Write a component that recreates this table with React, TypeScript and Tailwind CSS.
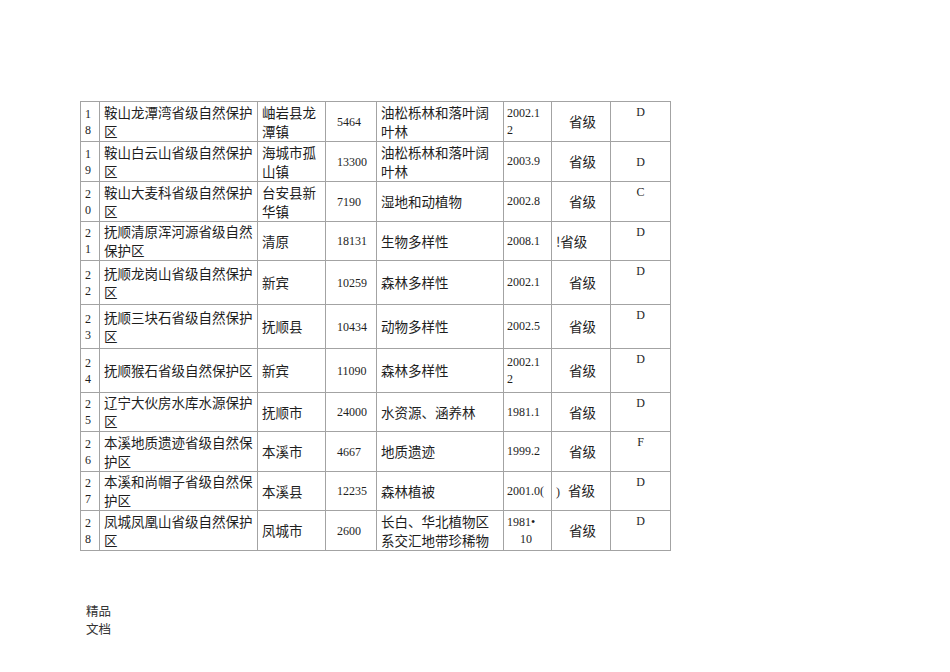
import React from "react";

type Row = {
  no: [string, string];
  name: string[];
  place: string[];
  area: string;
  kind: string[];
  date: React.ReactNode;
  level: React.ReactNode;
  grade: string;
  gradeMiddle?: boolean;
  h: number;
};

const rows: Row[] = [
  { no: ["1", "8"], name: ["鞍山龙潭湾省级自然保护", "区"], place: ["岫岩县龙", "潭镇"], area: "5464", kind: ["油松栎林和落叶阔", "叶林"], date: <>2002.1<br />2</>, level: "省级", grade: "D", h: 40 },
  { no: ["1", "9"], name: ["鞍山白云山省级自然保护", "区"], place: ["海城市孤", "山镇"], area: "13300", kind: ["油松栎林和落叶阔", "叶林"], date: "2003.9", level: "省级", grade: "D", gradeMiddle: true, h: 40 },
  { no: ["2", "0"], name: ["鞍山大麦科省级自然保护", "区"], place: ["台安县新", "华镇"], area: "7190", kind: ["湿地和动植物"], date: "2002.8", level: "省级", grade: "C", h: 40 },
  { no: ["2", "1"], name: ["抚顺清原浑河源省级自然", "保护区"], place: ["清原"], area: "18131", kind: ["生物多样性"], date: "2008.1", level: <span className="-ml-[13px]">!省级</span>, grade: "D", h: 39 },
  { no: ["2", "2"], name: ["抚顺龙岗山省级自然保护", "区"], place: ["新宾"], area: "10259", kind: ["森林多样性"], date: "2002.1", level: "省级", grade: "D", h: 44 },
  { no: ["2", "3"], name: ["抚顺三块石省级自然保护", "区"], place: ["抚顺县"], area: "10434", kind: ["动物多样性"], date: "2002.5", level: "省级", grade: "D", h: 44 },
  { no: ["2", "4"], name: ["抚顺猴石省级自然保护区"], place: ["新宾"], area: "11090", kind: ["森林多样性"], date: <>2002.1<br />2</>, level: "省级", grade: "D", h: 44 },
  { no: ["2", "5"], name: ["辽宁大伙房水库水源保护", "区"], place: ["抚顺市"], area: "24000", kind: ["水资源、涵养林"], date: "1981.1", level: "省级", grade: "D", h: 39 },
  { no: ["2", "6"], name: ["本溪地质遗迹省级自然保", "护区"], place: ["本溪市"], area: "4667", kind: ["地质遗迹"], date: "1999.2", level: "省级", grade: "F", h: 40 },
  { no: ["2", "7"], name: ["本溪和尚帽子省级自然保", "护区"], place: ["本溪县"], area: "12235", kind: ["森林植被"], date: "2001.0(", level: <span className="-ml-[13px]"><span className="font-['Liberation_Serif',serif] text-[12px] mr-[8px]">)</span>省级</span>, grade: "D", h: 39 },
  { no: ["2", "8"], name: ["凤城凤凰山省级自然保护", "区"], place: ["凤城市"], area: "2600", kind: ["长白、华北植物区", "系交汇地带珍稀物"], date: <>1981•<br /><span className="pl-[13px]">10</span></>, level: "省级", grade: "D", h: 40 },
];

const cjk = "font-['Noto_Sans_CJK_SC','Noto_Sans',sans-serif] text-[13.5px] leading-[19px]";
const serif = "font-['Liberation_Serif',serif] text-[12px]";

export default function App() {
  return (
    <div className="min-h-[672px] w-[950px] bg-white pl-[80px] pt-[101px] text-[#1e1e1e]">
      <table className="table-fixed border-collapse w-[591px]">
        <colgroup>
          <col className="w-[19px]" />
          <col className="w-[158px]" />
          <col className="w-[68px]" />
          <col className="w-[51px]" />
          <col className="w-[127px]" />
          <col className="w-[48px]" />
          <col className="w-[59px]" />
          <col className="w-[60px]" />
        </colgroup>
        <tbody>
          {rows.map((r, i) => (
            <tr key={i} style={{ height: r.h }}>
              <td className={`border border-[#a3a3a3] pl-[4px] align-middle ${serif} leading-[16px]`}>
                <div>{r.no[0]}</div>
                <div>{r.no[1]}</div>
              </td>
              <td className={`border border-[#a3a3a3] pl-[4px] align-middle ${cjk} whitespace-nowrap`}>
                {r.name.map((l, j) => <div key={j}>{l}</div>)}
              </td>
              <td className={`border border-[#a3a3a3] pl-[4px] align-middle ${cjk} whitespace-nowrap`}>
                {r.place.map((l, j) => <div key={j}>{l}</div>)}
              </td>
              <td className={`border border-[#a3a3a3] pl-[11px] align-middle ${serif}`}>{r.area}</td>
              <td className={`border border-[#a3a3a3] pl-[4px] align-middle ${cjk} whitespace-nowrap`}>
                {r.kind.map((l, j) => <div key={j}>{l}</div>)}
              </td>
              <td className={`border border-[#a3a3a3] pl-[3px] align-middle ${serif} leading-[17px] whitespace-nowrap`}>{r.date}</td>
              <td className={`border border-[#a3a3a3] pl-[17px] align-middle ${cjk} whitespace-nowrap`}>{r.level}</td>
              <td className={`border border-[#a3a3a3] text-center ${r.gradeMiddle ? "align-middle" : "align-top pt-[1px]"} ${serif}`}>{r.grade}</td>
            </tr>
          ))}
        </tbody>
      </table>
      <div className="mt-[51px] pl-[6px] font-['Noto_Sans_CJK_SC',sans-serif] text-[12.5px] leading-[18px] text-[#333]">
        <div>精品</div>
        <div>文档</div>
      </div>
    </div>
  );
}
